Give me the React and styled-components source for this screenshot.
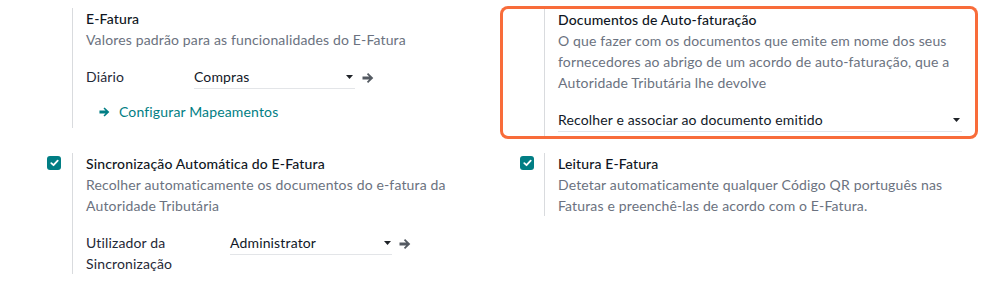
import React from 'react';
import styled, { createGlobalStyle } from 'styled-components';

const Global = createGlobalStyle`
  html, body { margin: 0; padding: 0; background: #ffffff; }
  body {
    font-family: Lato, "Noto Sans", sans-serif;
    font-size: 14px;
    line-height: 21px;
    letter-spacing: 0.15px;
    color: #1f2328;
  }
`;

const Grid = styled.div`
  display: grid;
  grid-template-columns: 472px 478px;
  row-gap: 12px;
  padding: 6px 0 0 28px;
  align-items: start;
`;

const Setting = styled.div`
  display: flex;
  padding: ${p => (p.$highlight ? '3px 0' : '2px 0 0')};
  border-radius: 8px;
  box-shadow: ${p => (p.$highlight ? 'inset 0 0 0 3px #f86c3a' : 'none')};
`;

const BoxCol = styled.div`
  flex: none;
  width: 44px;
  box-sizing: border-box;
  padding: 3px 0 0 ${p => p.$inset}px;
`;

const Check = styled.span`
  display: flex;
  align-items: center;
  justify-content: center;
  width: 14px;
  height: 14px;
  border-radius: 3px;
  background: #017e84;
`;

const Content = styled.div`
  flex: 1;
  min-width: 0;
  border-left: 1px solid #d9dbde;
  padding: 0 16px 0 13px;
`;

const Title = styled.div`
  color: #0f1623;
  font-weight: 500;
`;

const Desc = styled.div`
  color: #6b7280;
`;

const FieldRow = styled.div`
  display: grid;
  grid-template-columns: ${p => (p.$labelWidth ? `${p.$labelWidth}px auto` : '1fr')};
  margin-top: 16px;
  margin-bottom: ${p => p.$mb || 0}px;
  align-items: start;
`;

const Label = styled.div`
  color: #1f2937;
`;

const SelectWrap = styled.div`
  display: flex;
  align-items: center;
  gap: 7px;
`;

const Select = styled.div`
  display: flex;
  align-items: center;
  justify-content: space-between;
  box-sizing: border-box;
  width: ${p => (p.$width ? `${p.$width}px` : '100%')};
  padding: 0 ${p => p.$caretGap}px 1px 0;
  border-bottom: 1px solid #e3e5e8;
  color: #111827;
`;

const LinkButton = styled.a`
  display: flex;
  align-items: center;
  gap: 9px;
  margin-top: 6px;
  padding: 6px 0 6px 13px;
  color: #017e84;
  text-decoration: none;
`;

const Arrow = ({ color = '#545a62', w = 12, h = 10 }) => (
  <svg width={w} height={h} viewBox="0 0 12 10" fill={color} aria-hidden="true">
    <path d="M0.5 3.4h6.6L4.9 1.3 6.1 0.1 11.3 5 6.1 9.9 4.9 8.7 7.1 6.6H0.5z" />
  </svg>
);

const Caret = () => (
  <svg width="7" height="4" viewBox="0 0 7 4" fill="#1f2328" aria-hidden="true">
    <path d="M0 0h7L3.5 4z" />
  </svg>
);

const CheckMark = () => (
  <Check>
    <svg width="9" height="8" viewBox="0 0 9 8" fill="none" stroke="#fff" strokeWidth="1.8" strokeLinecap="round" strokeLinejoin="round">
      <path d="M1.3 4.2 3.5 6.2 7.7 1.6" />
    </svg>
  </Check>
);

const SelectField = ({ value, width, caretGap = 2, arrow = true }) => (
  <SelectWrap>
    <Select $width={width} $caretGap={caretGap}>
      <span>{value}</span>
      <Caret />
    </Select>
    {arrow && <Arrow />}
  </SelectWrap>
);

export default function App() {
  return (
    <>
      <Global />
      <Grid>
        <Setting>
          <BoxCol $inset={19} />
          <Content>
            <Title>E-Fatura</Title>
            <Desc>Valores padrão para as funcionalidades do E-Fatura</Desc>
            <FieldRow $labelWidth={108}>
              <Label>Diário</Label>
              <SelectField value="Compras" width={161} caretGap={2} />
            </FieldRow>
            <LinkButton href="#">
              <Arrow color="#017e84" w={11} h={10} />
              <span>Configurar Mapeamentos</span>
            </LinkButton>
          </Content>
        </Setting>

        <Setting $highlight>
          <BoxCol $inset={20} />
          <Content>
            <Title>Documentos de Auto-faturação</Title>
            <Desc>
              O que fazer com os documentos que emite em nome dos seus fornecedores ao abrigo de um
              acordo de auto-faturação, que a Autoridade Tributária lhe devolve
            </Desc>
            <FieldRow $mb={4}>
              <SelectField value="Recolher e associar ao documento emitido" caretGap={2} arrow={false} />
            </FieldRow>
          </Content>
        </Setting>

        <Setting>
          <BoxCol $inset={19}>
            <CheckMark />
          </BoxCol>
          <Content>
            <Title>Sincronização Automática do E-Fatura</Title>
            <Desc>Recolher automaticamente os documentos do e-fatura da Autoridade Tributária</Desc>
            <FieldRow $labelWidth={144}>
              <Label>Utilizador da Sincronização</Label>
              <SelectField value="Administrator" width={162} caretGap={1} />
            </FieldRow>
          </Content>
        </Setting>

        <Setting>
          <BoxCol $inset={20}>
            <CheckMark />
          </BoxCol>
          <Content>
            <Title>Leitura E-Fatura</Title>
            <Desc>
              Detetar automaticamente qualquer Código QR português nas Faturas e preenchê-las de
              acordo com o E-Fatura.
            </Desc>
          </Content>
        </Setting>
      </Grid>
    </>
  );
}
